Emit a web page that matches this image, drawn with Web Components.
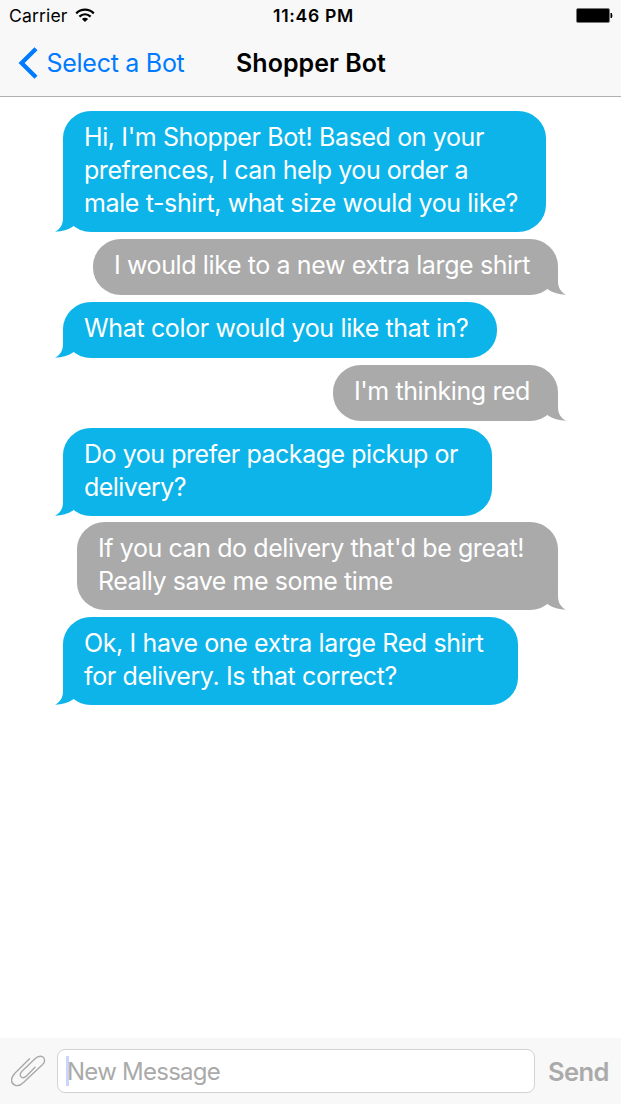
<!DOCTYPE html>
<html lang="en">
<head>
<meta charset="utf-8">
<title>Shopper Bot</title>
<style>
  body {
    margin: 0;
    background: #fff;
    font-family: Inter, "Liberation Sans", sans-serif;
  }
</style>
</head>
<body>
<chat-screen>
  <status-bar slot="top"></status-bar>
  <nav-bar slot="top" back="Select a Bot">Shopper Bot</nav-bar>

  <chat-bubble from="bot">
    <chat-line width="400">Hi, I'm Shopper Bot! Based on your</chat-line>
    <chat-line width="384">prefrences, I can help you order a</chat-line>
    <chat-line width="434">male t-shirt, what size would you like?</chat-line>
  </chat-bubble>
  <chat-bubble from="me">
    <chat-line width="416">I would like to a new extra large shirt</chat-line>
  </chat-bubble>
  <chat-bubble from="bot">
    <chat-line width="384.5">What color would you like that in?</chat-line>
  </chat-bubble>
  <chat-bubble from="me">
    <chat-line width="176">I'm thinking red</chat-line>
  </chat-bubble>
  <chat-bubble from="bot" wrapped>
    <chat-line width="374">Do you prefer package pickup or</chat-line>
    <chat-line width="102">delivery?</chat-line>
  </chat-bubble>
  <chat-bubble from="me" wrapped>
    <chat-line width="426">If you can do delivery that'd be great!</chat-line>
    <chat-line width="295">Really save me some time</chat-line>
  </chat-bubble>
  <chat-bubble from="bot" wrapped>
    <chat-line width="399.5">Ok, I have one extra large Red shirt</chat-line>
    <chat-line width="313">for delivery. Is that correct?</chat-line>
  </chat-bubble>

  <message-bar slot="bottom" placeholder="New Message">Send</message-bar>
</chat-screen>

<script>
// tracks a run of text out or in until it is `width` pixels wide
function fitText(el, width) {
  el.style.letterSpacing = "0px";
  const natural = el.getBoundingClientRect().width;
  const gap = (width - natural) / el.textContent.trim().length;
  el.style.letterSpacing = gap + "px";
}

class ChatScreen extends HTMLElement {
  constructor() {
    super();
    this.attachShadow({ mode: "open" }).innerHTML = `
<style>
  :host {
    display: flex;
    flex-direction: column;
    height: 100vh;
    min-height: 1104px;
  }
  header {
    box-sizing: border-box;
    height: 97px;
    background: #f8f8f8;
    border-bottom: 1px solid #b0b0b2;
  }
  main {
    flex: 1;
    display: flex;
    flex-direction: column;
    gap: 6.5px;
    padding: 14.2px 63px 0;
  }
</style>
<header><slot name="top"></slot></header>
<main><slot></slot></main>
<slot name="bottom"></slot>`;
  }
}

class StatusBar extends HTMLElement {
  constructor() {
    super();
    this.attachShadow({ mode: "open" }).innerHTML = `
<style>
  :host {
    display: grid;
    grid-template-columns: 1fr auto 1fr;
    align-items: center;
    height: 31px;
    padding: 0 8px 0 9px;
    font-size: 17.6px;
    line-height: 31px;
    color: #000;
  }
  .carrier { display: flex; align-items: center; gap: 7px; }
  .time { font-weight: 600; padding-left: 5px; }
  .battery { justify-self: end; }
  svg { display: block; }
</style>
<div class="carrier">
  <span>Carrier</span>
  <svg width="20" height="15" viewBox="0 0 20 15" fill="none" stroke="#000" stroke-width="2.3">
    <path d="M1.200 5.300C6.300.5 13.700.5 18.800 5.300"/>
    <path d="M4.400 8.600C7.700 5.600 12.300 5.600 15.600 8.600"/>
    <path d="M10 14 6.900 10.900C8.700 9.400 11.300 9.400 13.100 10.900Z" fill="#000" stroke="none"/>
  </svg>
</div>
<span class="time">11:46 PM</span>
<svg class="battery" width="37" height="15" viewBox="0 0 37 15">
  <rect x=".5" y=".5" width="33" height="14" rx="1.500" fill="#000" stroke="#777"/>
  <path d="M34.500 5h1.300q1.200 2.500 0 5h-1.300z" fill="#000"/>
</svg>`;
  }
  connectedCallback() {
    fitText(this.shadowRoot.querySelector(".carrier span"), 58.5);
    fitText(this.shadowRoot.querySelector(".time"), 86);
  }
}

class NavBar extends HTMLElement {
  constructor() {
    super();
    this.attachShadow({ mode: "open" }).innerHTML = `
<style>
  :host {
    display: grid;
    grid-template-columns: 1fr auto 1fr;
    align-items: center;
    height: 64px;
    padding: 0 18px;
    font-size: 25px;
    line-height: 64px;
    white-space: nowrap;
  }
  .back { display: flex; align-items: center; gap: 8.5px; color: #007aff; }
  .title { font-weight: 600; color: #000; padding-left: 1px; }
</style>
<div class="back">
  <svg width="20" height="32" viewBox="0 0 20 32" fill="none" stroke="#007aff" stroke-width="4.3">
    <path d="M18 1.800 3.600 16 18 30.200"/>
  </svg>
  <span></span>
</div>
<span class="title"></span>`;
  }
  connectedCallback() {
    const back = this.shadowRoot.querySelector(".back span");
    back.textContent = this.getAttribute("back");
    fitText(back, 138);
    const title = this.shadowRoot.querySelector(".title");
    title.textContent = this.textContent;
    fitText(title, 151);
  }
}

class ChatLine extends HTMLElement {
  constructor() {
    super();
    this.attachShadow({ mode: "open" }).innerHTML = `
<style>
  :host { display: block; width: max-content; white-space: nowrap; }
</style>
<slot></slot>`;
  }
  connectedCallback() {
    fitText(this, Number(this.getAttribute("width")));
  }
}

class ChatBubble extends HTMLElement {
  constructor() {
    super();
    this.attachShadow({ mode: "open" }).innerHTML = `
<style>
  :host {
    display: block;
    position: relative;
    box-sizing: border-box;
    width: max-content;
    min-height: 56.5px;
    padding: 9.9px 28px 12.1px 21px;
    border-radius: 28px / 27px;
    font-size: 25px;
    line-height: 33px;
    color: #fff;
    background: var(--fill);
  }
  :host([from="bot"]) { --fill: #0cb4e9; align-self: flex-start; }
  :host([from="me"]) { --fill: #aaa; align-self: flex-end; }
  :host([wrapped]) { padding-right: 34px; }
  svg {
    position: absolute;
    bottom: 0;
    left: -8px;
    fill: var(--fill);
  }
  :host([from="me"]) svg { left: auto; right: -8px; transform: scaleX(-1); }
</style>
<slot></slot>
<svg width="24" height="32" viewBox="0 0 24 32">
  <path d="M8 4V18C8 25 5 29 0 31.800 7 31.600 13 29.800 18 26.500L22 20Z"/>
</svg>`;
  }
}

class MessageBar extends HTMLElement {
  constructor() {
    super();
    this.attachShadow({ mode: "open" }).innerHTML = `
<style>
  :host {
    display: flex;
    align-items: center;
    box-sizing: border-box;
    height: 66px;
    padding: 0 12px 0 11px;
    background: #f8f8f8;
    font-size: 24px;
    color: #aaa;
  }
  .field {
    flex: 1;
    display: flex;
    align-items: center;
    box-sizing: border-box;
    height: 44px;
    margin: 0 13px 0 11px;
    padding-left: 8px;
    border: 1px solid #d2d2d4;
    border-radius: 8px;
    background: #fff;
  }
  .caret { width: 3px; height: 30px; margin-right: -2px; background: #cbd5fc; }
  .send { font-size: 25.5px; font-weight: 600; }
</style>
<svg width="35" height="32" viewBox="0 0 35 32" fill="none" stroke="#aaa" stroke-width="1.4" stroke-linecap="round">
  <path d="M18.500 3.700 3.900 18.200C-1 23.500 0 28 3 29.600 6 31.500 9 31 12.500 27.500L31.600 9.500C34.500 6.500 34 3.500 32 2 29.500.5 26.500 1.300 24 3.800L11 16.300C8.500 18.800 9 21 10.300 22 12 23.300 14 22.400 15.500 21L24 12.200"/>
</svg>
<div class="field"><span class="caret"></span><span class="hint"></span></div>
<span class="send"></span>`;
  }
  connectedCallback() {
    const hint = this.shadowRoot.querySelector(".hint");
    hint.textContent = this.getAttribute("placeholder");
    fitText(hint, 153);
    const send = this.shadowRoot.querySelector(".send");
    send.textContent = this.textContent;
    fitText(send, 61);
  }
}

customElements.define("chat-screen", ChatScreen);
customElements.define("status-bar", StatusBar);
customElements.define("nav-bar", NavBar);
customElements.define("chat-bubble", ChatBubble);
customElements.define("chat-line", ChatLine);
customElements.define("message-bar", MessageBar);
</script>
</body>
</html>
